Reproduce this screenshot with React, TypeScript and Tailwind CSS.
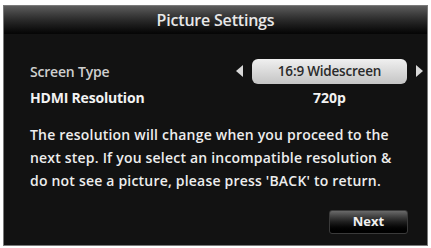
export default function App() {
  const font = { fontFamily: '"Open Sans", "Noto Sans", sans-serif' };
  return (
    <div className="w-[431px] h-[248px] bg-white pt-[5px] pl-[3px] pr-[3px] pb-[2px]" style={font}>
      <div className="flex flex-col h-full border border-[#7a7a7a] bg-[#121212]">
        <div className="h-[28px] flex items-center justify-center bg-gradient-to-b from-[#5c5c5c] via-[#2a2a2a] to-[#050505] text-[16px] font-semibold text-[#e8e8e8] tracking-[-0.2px]">
          Picture Settings
        </div>
        <div className="flex flex-col pl-[26px] pr-[4px] pt-[24px]">
          <div className="flex items-center h-[26px]">
            <div className="w-[206px] shrink-0 text-[14px] text-[#cfcfcf] font-semibold tracking-[-0.2px]">Screen Type</div>
            <span className="w-0 h-0 border-y-[6px] border-y-transparent border-r-[7px] border-r-[#d8d8d8]" />
            <div className="ml-[9px] w-[155px] shrink-0 h-[25px] rounded-[6px] bg-gradient-to-b from-[#f0f0f0] to-[#c4c4c4] flex items-center justify-center text-[13.5px] font-semibold text-[#2a2a2a] tracking-[-0.2px]">
              16:9 Widescreen
            </div>
            <span className="ml-[9px] w-0 h-0 border-y-[6px] border-y-transparent border-l-[7px] border-l-[#d8d8d8]" />
          </div>
          <div className="flex items-center h-[26px]">
            <div className="w-[222px] shrink-0 text-[14px] text-[#f2f2f2] font-bold tracking-[-0.2px]">HDMI Resolution</div>
            <div className="w-[155px] text-center text-[14px] text-[#f2f2f2] font-bold">720p</div>
          </div>
          <p className="mt-[13px] w-[370px] text-[14px] leading-[23px] text-[#ededed] font-semibold tracking-[0.2px]">
            The resolution will change when you proceed to the next step. If you select an incompatible resolution &amp; do not see a picture, please press 'BACK' to return.
          </p>
          <div className="flex justify-end mt-[18px]">
            <button className="w-[79px] h-[24px] mr-[15px] rounded-[3px] bg-gradient-to-b from-[#6a6a6a] via-[#1e1e1e] to-[#000000] border border-[#3a3a3a] text-[13px] font-bold text-[#f0f0f0]">
              Next
            </button>
          </div>
        </div>
      </div>
    </div>
  );
}
